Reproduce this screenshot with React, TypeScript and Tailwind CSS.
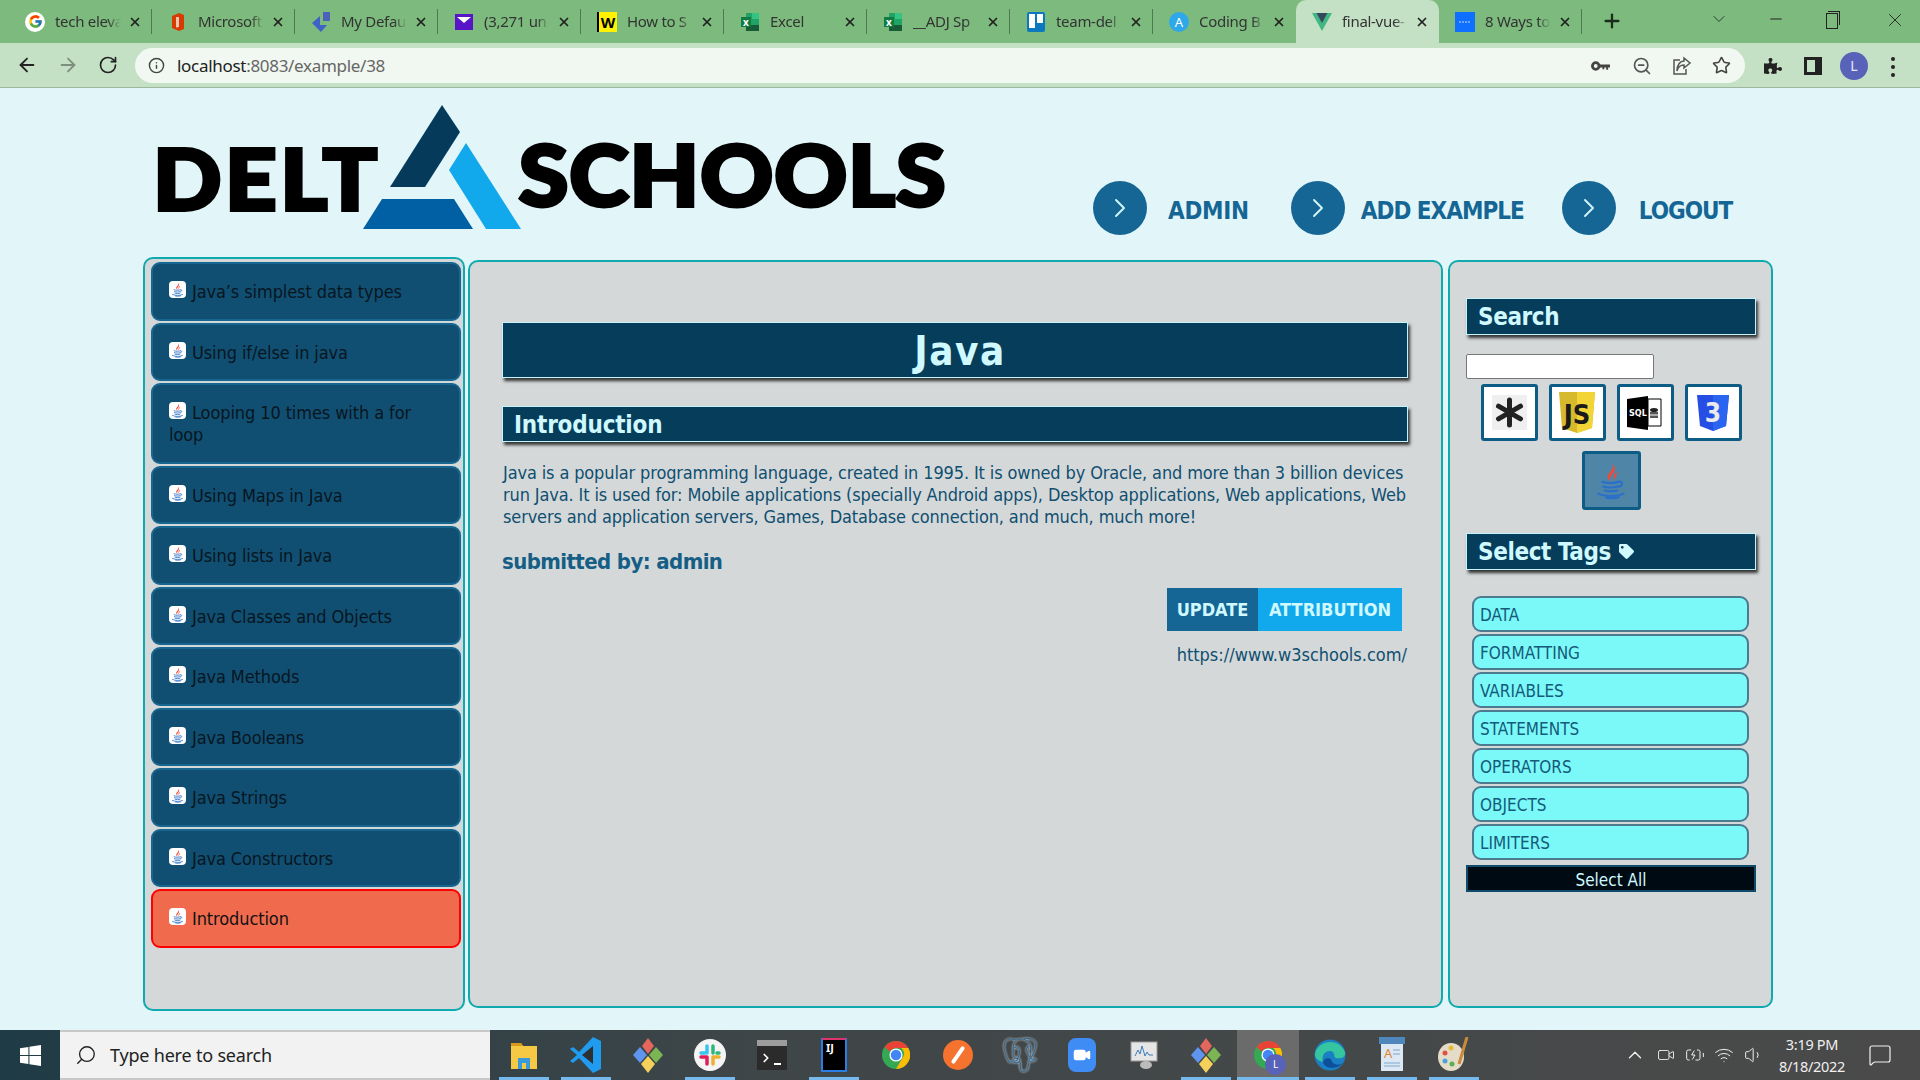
import React from 'react';
import { ArrowLeft, ArrowRight, RotateCw, Info, ZoomOut, Star, ChevronRight, ChevronDown, Minus, X, Plus, Search, ChevronUp, Volume1, Wifi, MessageSquare, Video, BatteryCharging } from 'lucide-react';
import { FaTag, FaPuzzlePiece } from 'react-icons/fa';
import { FcGoogle } from 'react-icons/fc';
import { SiPostgresql } from 'react-icons/si';

const JavaLogo = ({ className }: { className: string }) => (
  <svg viewBox="0 0 24 24" className={className} fill="none">
    <path d="M13 1C15 5 9 7 10 10 10.500 11.500 11.500 12 12 12.500 10 10 13 8 14 6 15 4.500 14.500 2.500 13 1z" fill="#ee4b3a" />
    <path d="M16 6C14 7.500 13 9 14 12 14.200 10 15.500 9 16 6z" fill="#ee4b3a" />
    <g stroke="#2a6fc9" strokeWidth="1.300" strokeLinecap="round">
      <path d="M6.500 12.500c2 1 8 1 10 0" />
      <path d="M17 12.500c2-.5 3 1.500 .5 3" />
      <path d="M7 15.500c2 .8 7 .8 9.500 0" />
      <path d="M8 18c2 .7 6 .7 8 0" />
      <path d="M4 20c4 2 12 2 16 0" />
      <path d="M9 22.500c3 .5 6 .4 8-.4" />
    </g>
  </svg>
);

const Fav = {
  office: (
    <svg viewBox="0 0 20 20" className="w-5 h-5"><path d="M11 1 4 4v12l7 3 5-2V3z" fill="#d83b01" /><path d="M11 5v10l-3 .5V5z" fill="#f3c6b0" /></svg>
  ),
  shield: (
    <svg viewBox="0 0 20 20" className="w-5 h-5"><path d="M12 0h7v9h-7z" fill="#4a62b8" /><path d="M9 4v9l7 0-6 7L1 11z" fill="#3f63c4" /></svg>
  ),
  mail: (
    <svg viewBox="0 0 20 20" className="w-5 h-5"><rect x="1" y="2" width="18" height="16" fill="#5a14c8" /><path d="M3 5h14l-7 6z" fill="#fff" /></svg>
  ),
  w: (
    <div className="w-5 h-5 bg-[#fff200] border-l-2 border-black text-[15px] font-bold leading-5 text-center text-black">W</div>
  ),
  excel: (
    <svg viewBox="0 0 20 20" className="w-5 h-5"><path d="M6 1h13v18H6z" fill="#21a366" /><path d="M12 1h7v6h-7z" fill="#33c481" /><path d="M6 13h13v6H6z" fill="#185c37" /><rect x="1" y="5" width="10" height="10" fill="#107c41" /><text x="3" y="13.500" fontSize="10" fontWeight="700" fill="#fff">x</text></svg>
  ),
  trello: (
    <svg viewBox="0 0 20 20" className="w-5 h-5"><rect x="1" y="0" width="18" height="20" rx="2" fill="#0c79bf" /><rect x="3" y="2" width="6" height="14" fill="#fff" /><rect x="11" y="2" width="6" height="9" fill="#fff" /></svg>
  ),
  atlas: (
    <svg viewBox="0 0 20 20" className="w-5 h-5"><circle cx="10" cy="10" r="10" fill="#2ea8e8" /><text x="10" y="15" fontSize="13" fill="#fff" textAnchor="middle">A</text></svg>
  ),
  vue: (
    <svg viewBox="0 0 20 20" className="w-5 h-5"><path d="M0 1h20L10 19z" fill="#41b883" /><path d="M4.500 1h11L10 11z" fill="#34495e" /></svg>
  ),
  blue: (
    <svg viewBox="0 0 20 20" className="w-5 h-5"><rect width="20" height="20" fill="#0f6fff" /><path d="M4 10h12" stroke="#cfe0ff" strokeDasharray="2 1" /></svg>
  ),
};

const tabs = [
  { title: 'tech eleva', icon: <div className="w-5 h-5 rounded-full bg-white flex items-center justify-center"><FcGoogle size={15} /></div> },
  { title: 'Microsoft', icon: Fav.office },
  { title: 'My Defau', icon: Fav.shield },
  { title: '(3,271 un', icon: Fav.mail },
  { title: 'How to S', icon: Fav.w },
  { title: 'Excel', icon: Fav.excel },
  { title: '__ADJ Sp', icon: Fav.excel },
  { title: 'team-del', icon: Fav.trello },
  { title: 'Coding B', icon: Fav.atlas },
  { title: 'final-vue-', icon: Fav.vue, active: true },
  { title: '8 Ways to', icon: Fav.blue },
];

const lessons = [
  'Java’s simplest data types',
  'Using if/else in java',
  'Looping 10 times with a for loop',
  'Using Maps in Java',
  'Using lists in Java',
  'Java Classes and Objects',
  'Java Methods',
  'Java Booleans',
  'Java Strings',
  'Java Constructors',
];

const tagList = ['DATA', 'FORMATTING', 'VARIABLES', 'STATEMENTS', 'OPERATORS', 'OBJECTS', 'LIMITERS'];

const LessonIcon = () => (
  <span className="inline-flex align-[1px] mr-[6px] w-[17px] h-[17px] bg-white rounded-[4px] items-center justify-center">
    <JavaLogo className="w-[15px] h-[15px]" />
  </span>
);

const NavLink = ({ label, gap, ml, track }: { label: string; gap: string; ml: string; track: string }) => (
  <div className={`flex items-center ${ml}`}>
    <div className="w-[54px] h-[54px] rounded-full bg-[#156694] flex items-center justify-center">
      <ChevronRight size={32} strokeWidth={1.400} className="text-[#d4f6fb]" />
    </div>
    <span className={`${gap} ${track} text-[24px] font-bold text-[#156694] mt-[6px] whitespace-nowrap`}>{label}</span>
  </div>
);

const TechBox = ({ children }: { children: React.ReactNode }) => (
  <div className="w-[57px] h-[57px] bg-white border-[3px] border-[#0d5c85] rounded-[3px] flex items-center justify-center">
    {children}
  </div>
);

const taskIcons: { node: React.ReactNode; line?: boolean; active?: boolean }[] = [
  { line: true, node: <svg viewBox="0 0 28 28" className="w-7 h-9"><path d="M1 2h10l2 3h14v23H1z" fill="#f6c945" /><path d="M1 2h10l2 3H1z" fill="#d99a1c" /><path d="M8 28V17h12v11h-4v-6h-4v6z" fill="#3a9bdc" /></svg> },
  { line: true, node: <svg viewBox="0 0 32 36" className="w-8 h-9"><path d="M23 0 31 4v28l-8 4L9 21l-6 5-3-2 7-6-7-6 3-2 6 5z" fill="#1f9cf0" /><path d="M23 9v18L12 18z" fill="#2d2f33" /></svg> },
  { node: <GitKraken /> },
  { line: true, node: <svg viewBox="0 0 32 32" className="w-8 h-8"><circle cx="16" cy="16" r="16" fill="#f4f4f4" /><g strokeWidth="3.500" strokeLinecap="round"><path d="M13 7v7M7 14h4" stroke="#36c5f0" /><path d="M19 7v7M25 14h-2" stroke="#2eb67d" /><path d="M19 25v-7M25 18h-6" stroke="#ecb22e" /><path d="M13 25v-7M7 18h6" stroke="#e01e5a" /></g></svg> },
  { node: <div className="w-[30px] h-[30px] bg-[#2b2b2b] border-t-[6px] border-[#9c9c9c] flex items-center pl-[2px] gap-[1px]"><ChevronRight size={14} className="text-white" strokeWidth={3} /><span className="w-[7px] h-[2px] bg-white mt-[12px]" /></div> },
  { line: true, node: <div className="w-[26px] h-[34px] bg-black border-2 border-[#2a7de1] border-t-[#e0336e] text-white text-[11px] font-bold leading-[16px] px-[3px]">IJ</div> },
  { node: <Chrome /> },
  { node: <div className="w-[30px] h-[30px] rounded-full bg-[#f5722f] flex items-center justify-center"><div className="w-[4px] h-[20px] bg-white rotate-[35deg] rounded-sm" /></div> },
  { node: <SiPostgresql size={34} className="text-[#35688f] [filter:drop-shadow(0_0_1px_white)]" /> },
  { node: <div className="w-[28px] h-[34px] rounded-[8px] bg-[#3f8cf5] flex items-center justify-center"><Video size={18} fill="white" className="text-white" /></div> },
  { node: <svg viewBox="0 0 30 30" className="w-[30px] h-[30px]"><rect x="2" y="2" width="26" height="19" fill="#e6e6e6" stroke="#9a9a9a" /><path d="M6 16l3-6 2 4 2-8 3 10 2-4 2 3h4" stroke="#3b7dbd" fill="none" /><ellipse cx="17" cy="25" rx="6" ry="4" fill="#bbb" /></svg> },
  { line: true, node: <GitKraken /> },
  { line: true, active: true, node: <div className="relative"><Chrome /><div className="absolute -right-[4px] -bottom-[4px] w-[21px] h-[21px] rounded-full bg-[#5762b8] text-white text-[10px] leading-[21px] text-center">L</div></div> },
  { line: true, node: <svg viewBox="0 0 32 36" className="w-8 h-9"><circle cx="16" cy="18" r="15.500" fill="#1b7fc4" /><path d="M1 17C3 4 24-1 31 15c1 6-5 7-9 6-3-1 0-5-5-7-6-1-10 5-8 11-5-1-8-4-8-8z" fill="#35c5a0" /><path d="M9 25c1 6 12 9 20 1-5 3-11 2-12-4-4-2-7 0-8 3z" fill="#0d4f9b" /></svg> },
  { line: true, node: <svg viewBox="0 0 26 36" className="w-[26px] h-9"><rect x="2" y="2" width="22" height="32" fill="#dce9f5" /><rect x="0" y="0" width="26" height="7" fill="#4f87bd" /><text x="5" y="21" fontSize="13" fill="#e0862a">A</text><path d="M14 13h7M14 17h7M5 26h16M5 29h16" stroke="#7fa6cc" /></svg> },
  { line: true, node: <svg viewBox="0 0 32 36" className="w-8 h-9"><ellipse cx="13" cy="20" rx="13" ry="14" fill="#e4dcc8" /><circle cx="7" cy="16" r="2.500" fill="#e2503f" /><circle cx="13" cy="11" r="2.500" fill="#e8b934" /><circle cx="7" cy="24" r="2.500" fill="#4aa3dd" /><circle cx="14" cy="27" r="2.500" fill="#58b04f" /><path d="M29 0 21 27" stroke="#c98a3b" strokeWidth="3" /></svg> },
];

function GitKraken() {
  return (
    <svg viewBox="0 0 30 36" className="w-[30px] h-9">
      <path d="M15 1l6 8-6 8-6-8z" fill="#e4665c" />
      <path d="M7 10l7 8-7 8-7-8z" fill="#5f94ef" />
      <path d="M23 10l7 8-7 8-7-8z" fill="#7cb554" />
      <path d="M15 19l7 8-7 9-7-9z" fill="#f5d15c" />
    </svg>
  );
}

function Chrome() {
  return (
    <svg viewBox="0 0 32 32" className="w-[28px] h-[32px]">
      <circle cx="16" cy="16" r="16" fill="#34a853" />
      <path d="M16 0A16 16 0 0 1 30 8H16a8 8 0 0 0-7 4L3 7A16 16 0 0 1 16 0z" fill="#ea4335" />
      <path d="M30 8a16 16 0 0 1-14 24l7-12a8 8 0 0 0-1-12z" fill="#fbbc05" />
      <circle cx="16" cy="16" r="7.500" fill="#fff" />
      <circle cx="16" cy="16" r="6" fill="#4285f4" />
    </svg>
  );
}

export default function App() {
  return (
    <div className="h-[1080px] w-[1920px] overflow-hidden flex flex-col bg-[#e2f6fa] font-['DejaVu_Sans_Condensed','DejaVu_Sans',sans-serif] [font-stretch:condensed]">
      {/* browser tab strip */}
      <div className="h-[43px] shrink-0 bg-[#7cbb7d] flex pl-[9px] font-['Noto_Sans',sans-serif] [font-stretch:normal]">
        {tabs.map((t, i) => (
          <div
            key={t.title}
            className={`w-[143px] h-[43px] shrink-0 relative flex items-center pl-[16px] ${t.active ? 'bg-[#c5e1c5] rounded-t-[10px]' : ''}`}
          >
            {t.icon}
            <span className="ml-[10px] w-[66px] whitespace-nowrap text-[15px] text-[#333] tracking-[-0.3px] [mask-image:linear-gradient(to_right,black_80%,transparent)]">{t.title}</span>
            <X size={14} strokeWidth={3} className="ml-[7px] text-[#222]" />
            {!t.active && i !== 8 && <div className="absolute right-0 top-[9px] h-[25px] w-px bg-[#4d7a4e]" />}
          </div>
        ))}
        <Plus size={22} strokeWidth={2.500} className="ml-[19px] mt-[10px] text-[#1c2b1c]" />
        <ChevronDown size={20} strokeWidth={1} className="ml-[86px] mt-[9px] text-[#222]" />
        <Minus size={18} strokeWidth={1.500} className="ml-[38px] mt-[10px] text-[#222]" />
        <div className="ml-[41px] mt-[13px] w-[12px] h-[16px] border border-[#222] relative"><div className="absolute -top-[3px] left-[1px] w-[12px] h-[14px] border-t border-r border-[#222]" /></div>
        <X size={22} strokeWidth={1} className="ml-[46px] mt-[9px] text-[#222]" />
      </div>

      {/* browser toolbar */}
      <div className="h-[45px] shrink-0 bg-[#c5e1c5] border-b border-[#9db69d] flex items-start font-['Noto_Sans',sans-serif] [font-stretch:normal]">
        <ArrowLeft size={22} className="ml-[16px] mt-[11px] text-[#222]" />
        <ArrowRight size={22} className="ml-[19px] mt-[11px] text-[#7f8f7f]" />
        <RotateCw size={20} className="ml-[19px] mt-[12px] text-[#222]" />
        <div className="ml-[17px] mt-[5px] w-[1610px] h-[35px] rounded-full bg-[#f1f7f1] flex items-center pl-[13px]">
          <Info size={17} className="text-[#444]" />
          <span className="ml-[12px] text-[17px] tracking-[-0.3px] text-[#666]"><span className="text-[#222]">localhost</span>:8083/example/38</span>
          <svg viewBox="0 0 20 12" className="ml-auto w-[19px] h-[12px]"><circle cx="5" cy="6" r="3.500" fill="none" stroke="#444" strokeWidth="3" /><path d="M9 4.500h11v3h-2v2.500h-2V7.500h-2v2h-2V7.500H9z" fill="#444" /></svg>
          <ZoomOut size={20} className="ml-[22px] text-[#555]" />
          <svg viewBox="0 0 20 20" className="ml-[20px] w-[20px] h-[20px]" fill="none" stroke="#555" strokeWidth="1.500"><path d="M8 4H2v14h12v-5" /><path d="M12 2l6 5-6 5V9C8 9 6 11 5 15 5 9 8 5 12 5z" /></svg>
          <Star size={19} className="ml-[20px] mr-[14px] text-[#444]" />
        </div>
        <FaPuzzlePiece size={18} className="ml-[19px] mt-[14px] text-[#222]" />
        <div className="ml-[22px] mt-[14px] w-[18px] h-[18px] border-[3px] border-[#222] border-r-[7px]" />
        <div className="ml-[18px] mt-[9px] w-[28px] h-[28px] rounded-full bg-[#5762b8] text-[#e8e8ff] text-[14px] leading-[28px] text-center">L</div>
        <div className="ml-[23px] mt-[14px] flex flex-col gap-[4px]">
          <span className="w-[4px] h-[4px] rounded-full bg-[#222]" />
          <span className="w-[4px] h-[4px] rounded-full bg-[#222]" />
          <span className="w-[4px] h-[4px] rounded-full bg-[#222]" />
        </div>
      </div>

      {/* page */}
      <div className="flex-1 min-h-0">
        <header className="h-[169px] flex items-start pl-[155px]">
          <div className="w-[792px] shrink-0 flex items-start font-['Lato',sans-serif] [font-stretch:normal] text-black font-black [-webkit-text-stroke:4px_black]">
            <span className="text-[90px] leading-[90px] mt-[44px] -ml-[2px] tracking-[3.500px] scale-y-[0.94]">DELT</span>
            <svg viewBox="0 0 158 124" className="w-[158px] h-[124px] mt-[17px] shrink-0 -ml-[18px]">
              <path d="M79 0 97 27 62 82H27z" fill="#053a5b" />
              <path d="M19 94h72l19 30H0z" fill="#0060a3" />
              <path d="M103 38l55 86h-35L86 65z" fill="#12a8ec" />
            </svg>
            <span className="text-[90px] leading-[90px] mt-[40px] -ml-[2px] tracking-[1px] scale-y-[0.94]">SCHOOLS</span>
          </div>
          <nav className="ml-[146px] mt-[93px] flex">
            <NavLink label="ADMIN" gap="ml-[21px]" ml="" track="tracking-[-0.3px]" />
            <NavLink label="ADD EXAMPLE" gap="ml-[16px]" ml="ml-[42px]" track="tracking-[-1px]" />
            <NavLink label="LOGOUT" gap="ml-[23px]" ml="ml-[38px]" track="tracking-[-1px]" />
          </nav>
        </header>

        <div className="flex items-start pl-[143px]">
          {/* lesson list */}
          <aside className="w-[322px] h-[754px] shrink-0 bg-[#d5d8d9] border-2 border-[#10a9ae] rounded-[10px] pt-[3px] pl-[6px] pr-[2px]">
            {lessons.map((l) => (
              <div key={l} className="mb-[2px] bg-[#114f72] border-2 border-[#176690] rounded-[9px] pl-[16px] pr-[20px] pt-[17px] pb-[15.500px] text-[18px] leading-[22px] tracking-[-0.1px] text-[#07161f]">
                <LessonIcon />{l}
              </div>
            ))}
            <div className="mt-[2px] bg-[#f06b4e] border-2 border-[#ff0000] rounded-[9px] pl-[16px] pr-[20px] pt-[17px] pb-[15.500px] text-[18px] leading-[22px] tracking-[-0.1px] text-[#111]">
              <LessonIcon />Introduction
            </div>
          </aside>

          {/* example */}
          <main className="w-[975px] h-[748px] shrink-0 ml-[3px] mt-[3px] bg-[#d5d8d9] border-2 border-[#10a9ae] rounded-[10px] pl-[32px] pr-[33px] pt-[60px]">
            <h1 className="h-[56px] pl-[10px] bg-[#063d5a] border border-[#c5f3fa] shadow-[2px_3px_3px_#333] text-center text-[40px] tracking-[1.500px] leading-[56px] font-bold text-[#cff9ff]">Java</h1>
            <h2 className="mt-[28px] h-[36px] bg-[#063d5a] border border-[#c5f3fa] shadow-[2px_3px_3px_#333] pl-[11px] text-[24px] tracking-[-0.2px] leading-[36px] font-bold text-[#cff9ff]">Introduction</h2>
            <p className="mt-[20px] pl-[1px] text-[18px] leading-[22px] tracking-[-0.13px] text-[#0f4f70]">
              Java is a popular programming language, created in 1995. It is owned by Oracle, and more than 3 billion devices run Java. It is used for: Mobile applications (specially Android apps), Desktop applications, Web applications, Web servers and application servers, Games, Database connection, and much, much more!
            </p>
            <h3 className="mt-[20px] text-[22px] leading-[28px] tracking-[-0.6px] font-bold text-[#155e85]">submitted by: admin</h3>
            <div className="mt-[12px] flex justify-end pr-[6px]">
              <button className="w-[91px] h-[43px] bg-[#156694] text-[18px] font-bold text-[#cff9ff]">UPDATE</button>
              <button className="w-[144px] h-[43px] bg-[#12a8ec] text-[18px] font-bold text-[#cff9ff]">ATTRIBUTION</button>
            </div>
            <div className="mt-[13px] pr-[1px] text-right text-[18px] leading-[22px] text-[#0f4f70]">https://www.w3schools.com/</div>
          </main>

          {/* filters */}
          <aside className="w-[325px] h-[748px] shrink-0 ml-[5px] mt-[3px] bg-[#d5d8d9] border-2 border-[#10a9ae] rounded-[10px] pl-[16px] pt-[36px]">
            <div className="w-[290px] h-[37px] bg-[#063d5a] border border-[#c5f3fa] shadow-[2px_3px_3px_#333] pl-[11px] text-[24px] tracking-[-0.4px] leading-[36px] font-bold text-[#cff9ff]">Search</div>
            <input className="block mt-[19px] w-[188px] h-[25px] bg-white border border-[#777] rounded-[2px]" />
            <div className="mt-[5px] w-[290px] flex flex-wrap justify-center gap-x-[11px]">
              <TechBox>
                <svg viewBox="0 0 35 35" className="w-[35px] h-[35px]"><rect width="35" height="35" fill="#efefef" /><path d="M17.500 5v25M6.500 11.200l22 12.600M28.500 11.200l-22 12.600" stroke="#222" strokeWidth="5" strokeLinecap="round" /></svg>
              </TechBox>
              <TechBox>
                <svg viewBox="0 0 36 42" className="w-[36px] h-[42px]"><path d="M0 0h36l-3 36-15 5-15-5z" fill="#d6b92c" /><path d="M18 0h18l-3 36-15 5z" fill="#f3d437" /><text x="18" y="32" fontSize="27" fontWeight="700" fill="#1a1a1a" textAnchor="middle">JS</text></svg>
              </TechBox>
              <TechBox>
                <svg viewBox="0 0 36 36" className="w-[36px] h-[36px]"><path d="M0 4 21 1v34L0 32z" fill="#000" /><path d="M21 4h13v27H21z" fill="#fff" stroke="#000" /><text x="2" y="21" fontSize="9" fontWeight="700" fill="#fff">SQL</text><ellipse cx="27" cy="15" rx="4" ry="2" fill="#222" /><rect x="23" y="17" width="8" height="2.500" fill="#555" /><rect x="23" y="20.500" width="8" height="2.500" fill="#555" /></svg>
              </TechBox>
              <TechBox>
                <svg viewBox="0 0 32 36" className="w-[32px] h-[36px]"><path d="M0 0h32l-3 31-13 5-13-5z" fill="#264de4" /><path d="M16 0h16l-3 31-13 5z" fill="#2965f1" /><text x="16" y="27" fontSize="26" fontWeight="700" fill="#ebebeb" textAnchor="middle">3</text></svg>
              </TechBox>
              <div className="mt-[10px] w-[59px] h-[59px] bg-[#4f86a8] border-[3px] border-[#0d5c85] rounded-[3px] flex items-center justify-center">
                <JavaLogo className="w-[38px] h-[40px]" />
              </div>
            </div>
            <div className="mt-[23px] w-[290px] h-[37px] bg-[#063d5a] border border-[#c5f3fa] shadow-[2px_3px_3px_#333] pl-[11px] text-[24px] tracking-[-0.4px] leading-[36px] font-bold text-[#cff9ff] flex items-center gap-[8px]">
              Select Tags <FaTag size={15} className="text-[#cff9ff]" />
            </div>
            <div className="mt-[26px] ml-[6px] w-[277px]">
              {tagList.map((t) => (
                <div key={t} className="h-[36px] mb-[2px] bg-[#7bf9f8] border-2 border-[#4c7a8f] rounded-[9px] pl-[6px] text-[17px] leading-[35px] text-[#155a7a]">{t}</div>
              ))}
            </div>
            <div className="mt-[5px] w-[290px] h-[27px] bg-[#000a12] border-2 border-[#0f4c6b] text-center text-[17px] leading-[27px] text-[#cff9ff]">Select All</div>
          </aside>
        </div>
      </div>

      {/* windows taskbar */}
      <div className="h-[50px] shrink-0 flex bg-gradient-to-r from-[#1f3b45] via-[#3f4648] via-40% to-[#4a4a4a] text-white font-['Noto_Sans',sans-serif] [font-stretch:normal]">
        <div className="w-[60px] flex items-center justify-center">
          <svg viewBox="0 0 20 20" className="w-[21px] h-[21px]"><path d="M0 3l8-1.200V9.500H0zM9 1.600 20 0v9.500H9zM0 10.500h8v7.700L0 17zM9 10.500h11V20L9 18.400z" fill="#fff" /></svg>
        </div>
        <div className="w-[430px] bg-[#f2f2f2] border-t-2 border-b-2 border-[#c8c8c8] flex items-center pl-[15px] text-[#222]">
          <Search size={22} strokeWidth={1.500} className="-scale-x-100" />
          <span className="ml-[13px] text-[18px] tracking-[-0.2px]">Type here to search</span>
        </div>
        <div className="ml-[3px] flex">
          {taskIcons.map((c, i) => (
            <div key={i} className={`w-[62px] h-[50px] relative flex items-center justify-center ${c.active ? 'bg-[#6b6b6b]' : ''}`}>
              {c.node}
              {c.line && <div className={`absolute bottom-0 h-[3px] bg-[#76b9ed] ${c.active ? 'left-0 right-0' : 'left-[6px] right-[6px]'}`} />}
            </div>
          ))}
        </div>
        <div className="ml-[139px] flex items-center text-[#f0f0f0]">
          <ChevronUp size={22} strokeWidth={1.500} />
          <Video size={18} strokeWidth={1.200} className="ml-[11px]" />
          <BatteryCharging size={20} strokeWidth={1.200} className="ml-[10px]" />
          <Wifi size={20} strokeWidth={1.200} className="ml-[9px]" />
          <Volume1 size={20} strokeWidth={1.200} className="ml-[10px]" />
          <div className="ml-[6px] w-[84px] text-center text-[14.500px] leading-[22px] tracking-[-0.3px]">
            <div>3:19 PM</div>
            <div>8/18/2022</div>
          </div>
          <MessageSquare size={24} strokeWidth={1.200} className="ml-[14px]" />
        </div>
      </div>
    </div>
  );
}
